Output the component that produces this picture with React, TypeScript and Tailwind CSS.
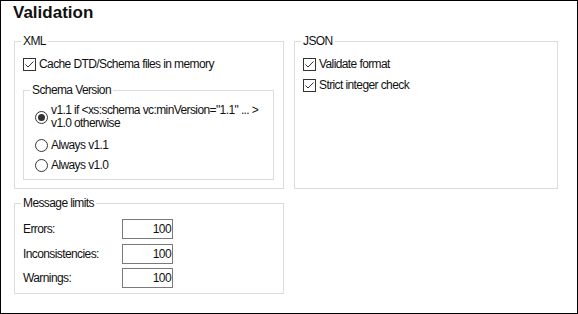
import React from "react";

function Check({ label }: { label: string }) {
  return (
    <div className="flex items-center h-[20px]">
      <span className="w-[13px] h-[13px] border border-[#333] bg-white flex items-center justify-center shrink-0">
        <svg width="11" height="11" viewBox="0 0 11 11">
          <polyline points="1.5,5.5 4,8 9.5,2.5" fill="none" stroke="#333" strokeWidth="1" />
        </svg>
      </span>
      <span className="ml-[3px] whitespace-nowrap">{label}</span>
    </div>
  );
}

function Radio({ checked, children, tall }: { checked?: boolean; children: React.ReactNode; tall?: boolean }) {
  return (
    <div className={"flex items-center " + (tall ? "" : "h-[20px]")}>
      <span className="w-[13px] h-[13px] rounded-full border border-[#333] bg-white flex items-center justify-center shrink-0">
        {checked && <span className="w-[7px] h-[7px] rounded-full bg-[#333]" />}
      </span>
      <span className="ml-[3px] whitespace-nowrap">{children}</span>
    </div>
  );
}

function NumRow({ label, className = "" }: { label: string; className?: string }) {
  return (
    <div className={"flex items-center h-[20px] " + className}>
      <span className="w-[99px] whitespace-nowrap">{label}</span>
      <span className="w-[51px] h-[20px] border border-[#7a7a7a] bg-white flex items-center justify-end pr-[1px] leading-[18px]">
        100
      </span>
    </div>
  );
}

export default function App() {
  return (
    <div className="w-[578px] h-[314px] border border-black bg-white overflow-hidden text-[12px] text-[#111] font-['Liberation_Sans',Arial,sans-serif] tracking-[-0.6px] leading-[20px]">
      <h1 className="text-[17px] font-bold pl-[12px] leading-[24px] tracking-normal">Validation</h1>
      <div className="flex gap-[10px] pl-[13px] mt-[9px]">
        <div className="flex flex-col w-[270px]">
          <fieldset className="border border-[#dcdcdc] px-[6px] pt-[6px] pb-[8px] h-[155px]">
            <legend className="px-[2px] leading-[14px]">XML</legend>
            <div className="ml-[2px] mr-[3px]">
              <Check label="Cache DTD/Schema files in memory" />
              <fieldset className="border border-[#dcdcdc] mt-[9px] pl-[6px] pt-[7px] pb-[4px]">
                <legend className="px-[2px] leading-[14px]">Schema Version</legend>
                <div className="ml-[5px]">
                  <Radio checked tall>
                    <div className="leading-[13px]">
                      <div>v1.1 if &lt;xs:schema vc:minVersion="1.1" ... &gt;</div>
                      <div>v1.0 otherwise</div>
                    </div>
                  </Radio>
                  <div className="mt-[5px]">
                    <Radio>Always v1.1</Radio>
                    <Radio>Always v1.0</Radio>
                  </div>
                </div>
              </fieldset>
            </div>
          </fieldset>
          <fieldset className="border border-[#dcdcdc] px-[6px] pt-[9px] pb-[5px] mt-[7px]">
            <legend className="px-[2px] leading-[14px]">Message limits</legend>
            <div className="ml-[2px]">
              <NumRow label="Errors:" />
              <NumRow label="Inconsistencies:" className="mt-[5px]" />
              <NumRow label="Warnings:" className="mt-[4px]" />
            </div>
          </fieldset>
        </div>
        <fieldset className="border border-[#dcdcdc] w-[264px] h-[155px] px-[6px] pt-[6px]">
          <legend className="px-[2px] leading-[14px]">JSON</legend>
          <div className="ml-[2px]">
            <Check label="Validate format" />
            <div className="mt-[1px]">
              <Check label="Strict integer check" />
            </div>
          </div>
        </fieldset>
      </div>
    </div>
  );
}
